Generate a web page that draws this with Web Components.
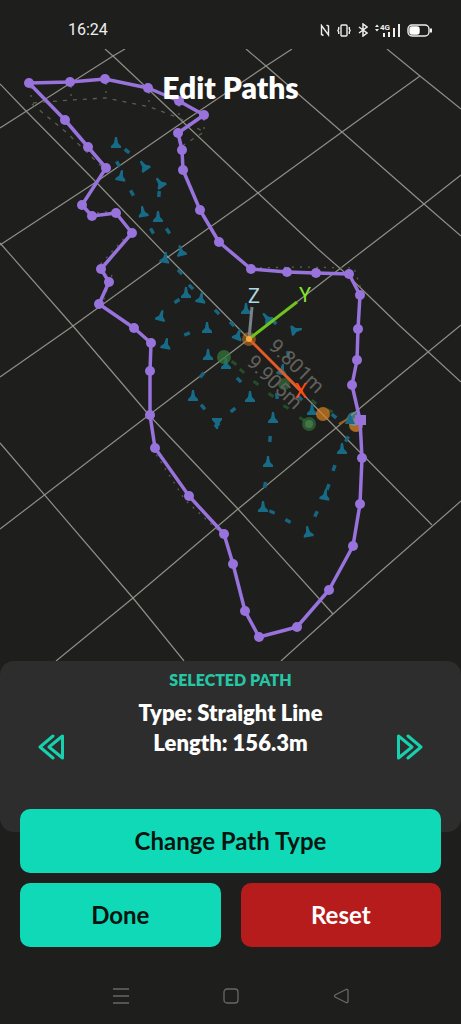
<!DOCTYPE html>
<html lang="en">
<head>
<meta charset="utf-8">
<meta name="viewport" content="width=device-width, initial-scale=1">
<title>Edit Paths</title>
<style>
    body {
        margin: 0;
        background: #1e1e1c;
        color: #fff;
        font-family: Lato, "Open Sans", sans-serif;
    }
</style>
</head>
<body>
<edit-paths-page>
    <status-bar slot="status">16:24</status-bar>
    <path-map slot="map">Edit Paths</path-map>
    <path-panel slot="panel">
        <span slot="label">Selected path</span>
        <span slot="type">Type: Straight Line</span>
        <span slot="length">Length: 156.3m</span>
    </path-panel>
    <action-button slot="actions" wide>Change Path Type</action-button>
    <action-button slot="actions">Done</action-button>
    <action-button slot="actions" danger>Reset</action-button>
    <system-nav slot="nav"></system-nav>
</edit-paths-page>

<script>
const pageTemplate = document.createElement('template');
pageTemplate.innerHTML = `
    <style>
        :host {
            display: flex;
            flex-direction: column;
            min-height: 100vh;
        }
        main {
            flex: 1;
        }
        /* the buttons are pulled up over the bottom edge of the panel */
        .actions {
            position: relative;
            display: grid;
            grid-template-columns: 1fr 1fr;
            gap: 10px 20px;
            padding: 0 20px;
            margin-top: -23px;
        }
    </style>
    <slot name="status"></slot>
    <main>
        <slot name="map"></slot>
        <slot name="panel"></slot>
        <div class="actions"><slot name="actions"></slot></div>
    </main>
    <slot name="nav"></slot>
`;

// 'edit-paths-page' component, stacks the parts of the screen
class EditPathsPage extends HTMLElement {
    constructor() {
        super();
        this.attachShadow({ mode: 'open' });
        this.shadowRoot.appendChild(pageTemplate.content.cloneNode(true));
    }
}

const statusTemplate = document.createElement('template');
statusTemplate.innerHTML = `
    <style>
        :host {
            display: flex;
            align-items: center;
            justify-content: space-between;
            box-sizing: border-box;
            height: 49px;
            padding: 11px 29px 0 68px;
            color: #eee;
            font: 16px/20px Roboto, sans-serif;
        }
        .icons {
            display: flex;
            align-items: center;
            gap: 7px;
        }
        svg {
            display: block;
            fill: none;
            stroke: #eee;
        }
        text {
            fill: #eee;
            stroke: none;
            font: 700 8px Roboto, sans-serif;
        }
    </style>
    <time><slot></slot></time>
    <div class="icons">
        <svg width="10" height="13" stroke-width="1.4"><path d="M3.500 11.500 1.500 10.500V1.500L8.500 11V2L6.500 1.200"/></svg>
        <svg width="14" height="13" stroke-width="1.4"><rect x="4" y="1" width="6" height="11" rx="1"/><path d="M1.700 3v2l-.8 1.500 .8 1.500v2M12.300 3v2l.8 1.500-.8 1.500v2"/></svg>
        <svg width="10" height="14" stroke-width="1.5"><path d="M1 4l8 6-4 3V1l4 3-8 6"/></svg>
        <svg width="25" height="15" stroke-width="2">
            <path d="M0 4 2 1.500 4 4ZM0 6 2 8.500 4 6Z" fill="#eee" stroke="none"/>
            <text x="5" y="7">4G</text>
            <path d="M9 10v4M14 9v5M19 5v9M24 1v13"/>
        </svg>
        <svg width="25" height="13" stroke-width="1.400"><rect x="1" y="1" width="21" height="11" rx="4"/><rect x="3" y="3" width="9" height="7" rx="2" fill="#fff" stroke="#fff"/><path d="M24 4.500v4" stroke-width="2"/></svg>
    </div>
`;

// 'status-bar' component, the phone's own clock and icons
class StatusBar extends HTMLElement {
    constructor() {
        super();
        this.attachShadow({ mode: 'open' });
        this.shadowRoot.appendChild(statusTemplate.content.cloneNode(true));
    }
}

// ground grid, one polyline per grid line
const GRID = [
    '0,84 26,111 96,182 168,257 249,339 336,428 432,525',
    '105,49 113,56 183,122 258,193 319,250 343,271 400,326 461,382',
    '246,49 266,66 342,132 424,204 461,236',
    '387,49 420,76 461,109',
    '0,243 73,326 149,415 238,509 333,614',
    '0,443 133,598 184,661',
    '125,49 113,56 0,128',
    '292,49 266,66 183,122 96,182 0,245',
    '420,76 342,132 258,193 168,257 73,326 0,377',
    '461,175 424,204 364,250 249,339 149,415 0,529',
    '461,325 400,375 336,428 238,509 133,598 56,661',
    '461,501 380,572 333,614 281,661'
];

// selected path, in drawing order
const PATH = [
    [29, 83], [70, 82], [105, 79], [148, 88], [179, 101], [204, 115], [178, 133],
    [182, 150], [183, 170], [200, 210], [219, 242], [251, 269], [287, 272],
    [316, 273], [349, 274], [360, 295], [358, 329], [357, 360], [352, 385],
    [360, 420], [362, 458], [360, 504], [353, 546], [329, 590], [297, 627],
    [259, 637], [245, 611], [233, 564], [224, 534], [189, 496], [155, 448],
    [150, 415], [150, 371], [151, 343], [134, 328], [99, 304], [109, 282],
    [101, 269], [132, 233], [116, 213], [92, 216], [82, 205], [106, 168],
    [88, 147], [65, 120]
];

// index of the point drawn as a square
const START = 19;

// x, y, tilt of each waypoint arrow
const ARROWS = [
    [116, 143, 0], [144, 166, -35], [121, 176, 10], [160, 183, -35], [143, 212, -10],
    [158, 217, 0], [165, 258, 10], [181, 251, -15], [186, 293, 0], [201, 298, 10],
    [161, 316, 15], [166, 344, 10], [207, 328, 0], [208, 355, 0], [193, 396, 0],
    [217, 423, 180], [250, 397, 0], [246, 309, 0], [238, 335, 20], [226, 364, 0],
    [267, 318, -40], [296, 330, 80], [282, 370, 10], [273, 418, 0], [312, 410, 0],
    [268, 462, 0], [263, 507, 0], [308, 532, -10], [325, 495, 10], [342, 449, 0]
];

// x, y, angle of each dash between the waypoints
const DASHES = [
    [127, 151, 40], [118, 164, 60], [132, 193, 60], [159, 194, 95], [152, 231, 60],
    [168, 231, 55], [180, 272, 45], [191, 287, 45], [177, 301, -35], [217, 312, 45],
    [187, 334, -20], [232, 324, 45], [202, 375, -50], [203, 407, 50],
    [233, 410, -40], [239, 380, 45], [274, 322, 35], [270, 439, 95], [265, 485, 100],
    [272, 512, 25], [288, 521, 30], [316, 514, -65], [328, 487, -70],
    [334, 468, -70], [347, 439, -60], [334, 416, 40], [300, 398, 45], [277, 396, 85],
    [288, 354, 85], [217, 422, 40], [217, 425, -40]
];

const GREEN_DASHES = [
    [242, 371, 40], [256, 383, 35], [271, 395, 35], [286, 407, 30], [302, 419, 30],
    [234, 363, 35], [314, 402, 40], [330, 411, 20]
];

const mapTemplate = document.createElement('template');
mapTemplate.innerHTML = `
    <style>
        :host {
            display: block;
            position: relative;
        }
        h1 {
            position: absolute;
            top: 20px;
            left: 0;
            right: 0;
            margin: 0;
            font-size: 30px;
            line-height: 36px;
            font-weight: 800;
            text-align: center;
        }
        svg {
            display: block;
            width: 100%;
        }
        .grid { fill: none; stroke: #8f8e86; stroke-width: 1.2; }
        .shadow { fill: none; stroke: #5c5d50; stroke-width: 1.3; stroke-dasharray: 4 6; }
        .shadow .fine { stroke-dasharray: 2 6; }
        .dash { stroke: #17657f; stroke-width: 3.5; }
        .arrow { fill: #176b87; }
        .green { stroke: #254d2b; stroke-width: 3; }
        .path { fill: none; stroke: #9873db; stroke-width: 3.5; stroke-linejoin: round; }
        .points { fill: #9873db; }
        text { font-family: Roboto, sans-serif; text-anchor: middle; }
        .axis { font-size: 20px; }
        .distance { font-size: 20px; fill: #62615d; }
    </style>
    <svg viewBox="0 49 461 612" role="img" aria-label="Flight paths">
        <g class="grid"></g>
        <g class="shadow">
            <path d="M33 103 71 100 106 98 150 107 179 118 204 132 182 146"/>
            <path d="M32 104 66 132 103 168"/>
            <path class="fine" d="M31 87V103M71 86V100M106 83V98M149 92V107M179 105V118M204 119V132"/>
            <path class="fine" d="M152 448 185 500 222 534M129 233 98 267M252 268 300 267 354 268 363 295M97 213 114 211M112 275 103 302"/>
        </g>
        <g class="dashes"></g>
        <g class="arrows"></g>
        <g fill="#347a3d">
            <circle cx="224" cy="357" r="7" opacity=".7"/>
            <circle cx="309" cy="424" r="7" opacity=".6"/>
            <circle cx="309" cy="424" r="4" opacity=".4" fill="#67a867"/>
            <circle cx="284" cy="384" r="6" opacity=".6"/>
        </g>
        <g fill="#d98322">
            <circle cx="249" cy="339" r="7" opacity=".5"/>
            <circle cx="323" cy="414" r="7" opacity=".7"/>
            <circle cx="356" cy="425" r="7" opacity=".75"/>
        </g>
        <path d="M339 424 350 418" stroke="#99621f" stroke-width="2"/>
        <circle cx="354" cy="419" r="7" fill="#69a2a8" opacity=".65"/>
        <path class="arrow" d="M350 413 355 424 345 424Z"/>
        <text class="distance" transform="translate(292 371) rotate(44)">9.801m</text>
        <text class="distance" transform="translate(270 387) rotate(44)">9.905m</text>
        <g fill="none" stroke-width="3">
            <path d="M249 339 252 307" stroke="#7a8389"/>
            <path d="M249 339 297 302" stroke="#6fc31f"/>
            <path d="M249 339 302 392" stroke="#e35b26"/>
        </g>
        <circle cx="249" cy="339" r="3" fill="#f3a944"/>
        <text class="axis" x="254" y="303" fill="#add8e6">Z</text>
        <text class="axis" x="305" y="302" fill="#84e32b">Y</text>
        <text class="axis" x="301" y="398" fill="#ff4a12">X</text>
        <g class="selected"></g>
    </svg>
    <h1><slot></slot></h1>
`;

// 'path-map' component, draws the grid, the waypoints and the selected path
class PathMap extends HTMLElement {
    constructor() {
        super();
        this.attachShadow({ mode: 'open' });
        this.shadowRoot.appendChild(mapTemplate.content.cloneNode(true));
        this.drawGrid();
        this.drawWaypoints();
        this.drawPath();
    }

    drawGrid() {
        this.shadowRoot.querySelector('.grid').innerHTML =
            GRID.map(line => `<polyline points="${line}"/>`).join('');
    }

    drawWaypoints() {
        const dash = (cls, [x, y, angle]) =>
            `<path class="${cls}" d="M-3 0H3" transform="translate(${x} ${y}) rotate(${angle})"/>`;
        this.shadowRoot.querySelector('.dashes').innerHTML =
            DASHES.map(d => dash('dash', d)).join('') +
            GREEN_DASHES.map(d => dash('green', d)).join('');
        this.shadowRoot.querySelector('.arrows').innerHTML = ARROWS.map(([x, y, angle]) =>
            `<path class="arrow" d="M-1 -6H1L2 0 5 3V5H-5V3L-2 0Z" transform="translate(${x} ${y}) rotate(${angle})"/>`
        ).join('');
    }

    drawPath() {
        const points = PATH.map(([x, y], i) => i === START
            ? `<rect x="${x - 5}" y="${y - 5}" width="11" height="10"/>`
            : `<circle cx="${x}" cy="${y}" r="5"/>`);
        this.shadowRoot.querySelector('.selected').innerHTML =
            `<polygon class="path" points="${PATH.join(' ')}"/><g class="points">${points.join('')}</g>`;
    }
}

const panelTemplate = document.createElement('template');
panelTemplate.innerHTML = `
    <style>
        :host {
            display: flex;
            align-items: center;
            justify-content: space-between;
            box-sizing: border-box;
            min-height: 171px;
            padding: 0 32px;
            border-radius: 14px;
            background: #2d2d2d;
        }
        .info {
            align-self: flex-start;
            padding-top: 9px;
            text-align: center;
            font-size: 22px;
            line-height: 30px;
            font-weight: 800;
        }
        p {
            margin: 0;
        }
        .label {
            margin-bottom: 8px;
            color: #26c6a4;
            font-size: 16px;
            line-height: 20px;
            text-transform: uppercase;
        }
        button {
            padding: 6px;
            border: 0;
            background: none;
            cursor: pointer;
        }
        svg {
            display: block;
            fill: none;
            stroke: #16d0ae;
            stroke-width: 3;
            stroke-linecap: round;
            stroke-linejoin: round;
        }
    </style>
    <button type="button" aria-label="Previous path">
        <svg width="26" height="26"><path d="M24.500 2V24L11 13ZM15 2 2 13 15 24"/></svg>
    </button>
    <div class="info">
        <p class="label"><slot name="label"></slot></p>
        <p><slot name="type"></slot></p>
        <p><slot name="length"></slot></p>
    </div>
    <button type="button" aria-label="Next path">
        <svg width="26" height="26"><path d="M1.500 2V24L15 13ZM11 2 24 13 11 24"/></svg>
    </button>
`;

// 'path-panel' component, facts about the selected path
class PathPanel extends HTMLElement {
    constructor() {
        super();
        this.attachShadow({ mode: 'open' });
        this.shadowRoot.appendChild(panelTemplate.content.cloneNode(true));
    }
}

const buttonTemplate = document.createElement('template');
buttonTemplate.innerHTML = `
    <style>
        :host {
            display: block;
        }
        :host([wide]) {
            grid-column: 1 / -1;
        }
        button {
            display: block;
            width: 100%;
            height: 64px;
            padding: 0 16px;
            border: 0;
            border-radius: 10px;
            background: #10d9b8;
            color: #04140f;
            font: 700 24px/28px Lato, "Open Sans", sans-serif;
            cursor: pointer;
        }
        :host([danger]) button {
            background: #b51c1b;
            color: #fff;
        }
    </style>
    <button type="button"><slot></slot></button>
`;

// 'action-button' component, 'wide' spans the row and 'danger' makes it red
class ActionButton extends HTMLElement {
    constructor() {
        super();
        this.attachShadow({ mode: 'open' });
        this.shadowRoot.appendChild(buttonTemplate.content.cloneNode(true));
    }
}

const navTemplate = document.createElement('template');
navTemplate.innerHTML = `
    <style>
        :host {
            display: flex;
            justify-content: center;
            gap: 78px;
            padding: 33px 0 12px;
        }
        button {
            padding: 8px;
            border: 0;
            background: none;
        }
        svg {
            display: block;
            fill: none;
            stroke: #686868;
            stroke-width: 1.3;
            stroke-linejoin: round;
        }
    </style>
    <button type="button" aria-label="Recent apps">
        <svg width="16" height="16"><path d="M0 1H16M0 8H16M0 15H16"/></svg>
    </button>
    <button type="button" aria-label="Home">
        <svg width="16" height="16"><rect x="1" y="1" width="14" height="14" rx="3"/></svg>
    </button>
    <button type="button" aria-label="Back">
        <svg width="16" height="16"><path d="M13 1.500 2 7Q1 8 2 9L13 14.500Q15 15 15 13V3Q15 1 13 1.500Z"/></svg>
    </button>
`;

// 'system-nav' component, the phone's navigation keys
class SystemNav extends HTMLElement {
    constructor() {
        super();
        this.attachShadow({ mode: 'open' });
        this.shadowRoot.appendChild(navTemplate.content.cloneNode(true));
    }
}

customElements.define('edit-paths-page', EditPathsPage);
customElements.define('status-bar', StatusBar);
customElements.define('path-map', PathMap);
customElements.define('path-panel', PathPanel);
customElements.define('action-button', ActionButton);
customElements.define('system-nav', SystemNav);
</script>
</body>
</html>
